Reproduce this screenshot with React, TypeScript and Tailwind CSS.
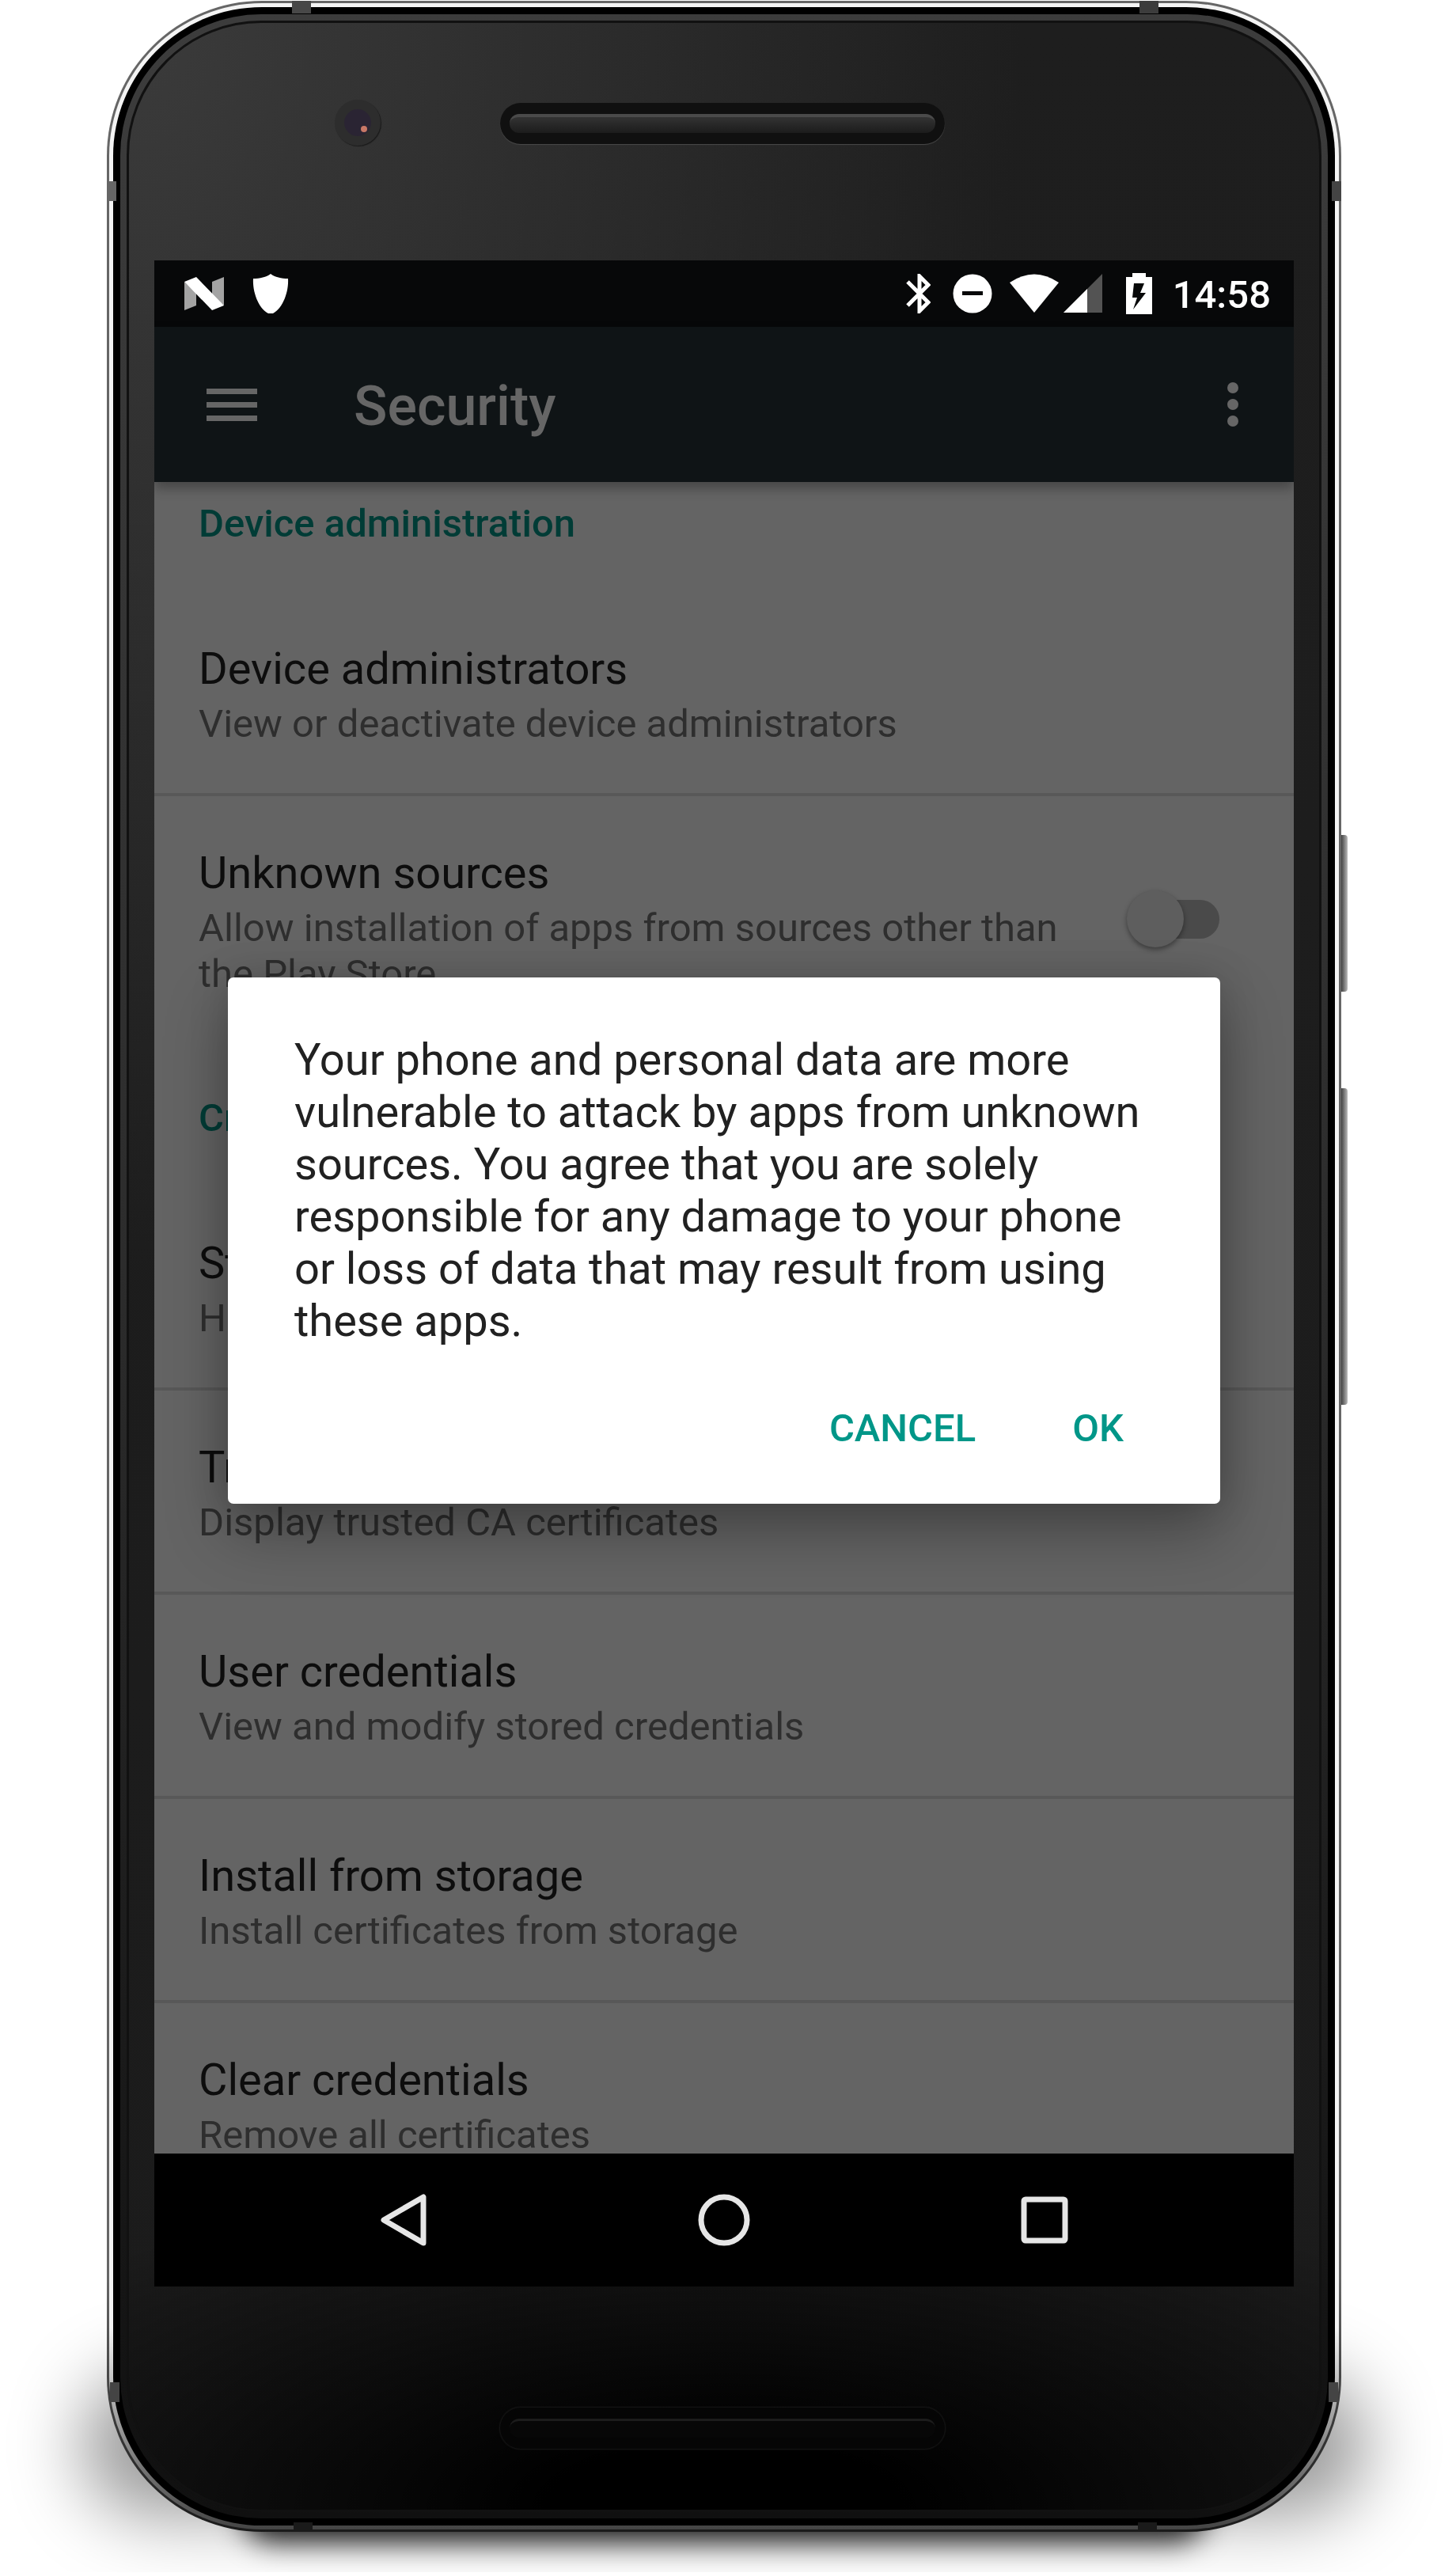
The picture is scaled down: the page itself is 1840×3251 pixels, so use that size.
import React from "react";

const Item = ({ title, summary, last }: { title: string; summary: string; last?: boolean }) => (
  <li className={last ? "" : "border-b-4 border-[#585858]"}>
    <a href="#" className="block px-14 pt-16 pb-[58px]">
      <span className="block text-[56px] leading-[66px] text-[#0d0d0d]">{title}</span>
      <span className="mt-2 block text-[49px] leading-[58px] text-[#2e2e2e]">{summary}</span>
    </a>
  </li>
);

const Slot = ({ dim }: { dim?: boolean }) => (
  <div
    className={
      dim
        ? "flex h-[52px] w-[562px] items-center rounded-[26px] bg-[#050505] px-3 shadow-[0_0_2px_1px_#191919]"
        : "flex h-[52px] w-[562px] items-center rounded-[26px] bg-[#101010] px-3 shadow-[0_1px_1px_#4a4a4a]"
    }
  >
    <div
      className={
        dim
          ? "h-6 w-full rounded-full border-t-3 border-[#1c1c1c] bg-[#070707]"
          : "h-6 w-full rounded-full border-t-4 border-[#4a4a4a] bg-linear-to-b from-[#333] to-[#1c1c1c]"
      }
    />
  </div>
);

const StatusBar = () => (
  <div className="flex h-[84px] shrink-0 items-center justify-between bg-[#070809] pr-[29px] pl-[38px] text-white">
    <div className="flex items-center gap-9">
      <svg width="50" height="42" viewBox="0 0 50 42" aria-label="Android N">
        <path d="M0 6 15 20V36L0 42Z" fill="#a3a3a3" />
        <path d="M35 6 50 0V36L35 24Z" fill="#a3a3a3" />
        <path d="M0 6 15 0 50 36 35 42Z" fill="#fff" />
      </svg>
      <svg width="46" height="50" viewBox="0 0 46 50" aria-label="Shield">
        <path d="M23 0C18 4 9 6 1 6C0 22 7 43 20 50H26C39 43 46 22 45 6C37 6 28 4 23 0Z" fill="#fff" />
      </svg>
    </div>
    <div className="flex items-center">
      <svg width="31" height="50" viewBox="0 0 31 50" aria-label="Bluetooth">
        <path d="M2 10 28 36 17 47V3L28 14 2 40" fill="none" stroke="#fff" strokeWidth="5" />
      </svg>
      <svg className="ml-7" width="50" height="50" viewBox="0 0 50 50" aria-label="Do not disturb">
        <circle cx="25" cy="25" r="24.5" fill="#fff" />
        <path d="M12 22H38V27H12Z" fill="#070809" />
      </svg>
      <svg className="ml-[22px]" width="62" height="50" viewBox="0 0 62 50" aria-label="Wi-Fi">
        <path d="M0 11Q31 -10 62 11L31 49Z" fill="#fff" />
      </svg>
      <svg className="ml-[6px]" width="49" height="50" viewBox="0 0 49 50" aria-label="Signal">
        <path d="M49 0V49H0Z" fill="#535353" />
        <path d="M30 19V49H0Z" fill="#fff" />
      </svg>
      <svg className="ml-[30px]" width="33" height="52" viewBox="0 0 33 52" aria-label="Battery charging">
        <path d="M8 0H25V5H33V52H0V5H8Z" fill="#fff" />
        <path d="M10 13H23L18 25H25L9 46L14 31H8Z" fill="#070809" />
      </svg>
      <span className="ml-[26px] pt-1 text-[49px] leading-[58px] font-medium">14:58</span>
    </div>
  </div>
);

const AppBar = () => (
  <header className="relative z-10 flex h-[196px] shrink-0 items-center bg-[#0f1416] pr-[70px] pl-[66px] text-[#666] shadow-[0_8px_14px_rgba(0,0,0,0.3)]">
    <button aria-label="Menu" className="flex w-16 flex-col gap-[10px]">
      <span className="h-[7px] w-full bg-current" />
      <span className="h-[7px] w-full bg-current" />
      <span className="h-[7px] w-full bg-current" />
    </button>
    <h1 className="ml-[122px] flex-1 pt-1 text-[70px] leading-[82px] font-medium">Security</h1>
    <button aria-label="More options" className="flex flex-col gap-[7px]">
      <span className="size-[14px] rounded-full bg-current" />
      <span className="size-[14px] rounded-full bg-current" />
      <span className="size-[14px] rounded-full bg-current" />
    </button>
  </header>
);

const Category = ({ children, first }: { children: string; first?: boolean }) => (
  <h2
    className={
      first
        ? "px-14 pt-6 pb-[57px] text-[49px] leading-[58px] font-medium text-[#003c36]"
        : "px-14 pt-[66px] pb-[57px] text-[49px] leading-[58px] font-medium text-[#003c36]"
    }
  >
    {children}
  </h2>
);

const Settings = () => (
  <main className="min-h-0 flex-1 overflow-hidden bg-[#646464]">
    <Category first>Device administration</Category>
    <ul>
      <Item title="Device administrators" summary="View or deactivate device administrators" />
      <li>
        <label className="flex items-center px-14 pt-16 pb-[58px]">
          <span className="flex-1 pr-14">
            <span className="block text-[56px] leading-[66px] text-[#0d0d0d]">Unknown sources</span>
            <span className="mt-2 block text-[49px] leading-[58px] text-[#2e2e2e]">
              Allow installation of apps from sources other than the Play Store
            </span>
          </span>
          <input
            type="checkbox"
            role="switch"
            className="relative mr-[38px] mb-2 h-[49px] w-[105px] appearance-none rounded-full bg-[#4a4a4a] before:absolute before:-top-3 before:-left-3 before:size-[72px] before:rounded-full before:bg-[#5e5e5e] before:shadow-[0_3px_6px_rgba(0,0,0,0.4)]"
          />
        </label>
      </li>
    </ul>
    <Category>Credential storage</Category>
    <ul>
      <Item title="Storage type" summary="Hardware-backed" />
      <Item title="Trusted credentials" summary="Display trusted CA certificates" />
      <Item title="User credentials" summary="View and modify stored credentials" />
      <Item title="Install from storage" summary="Install certificates from storage" />
      <Item title="Clear credentials" summary="Remove all certificates" last />
    </ul>
  </main>
);

const Dialog = () => (
  <div className="absolute inset-0 z-20 flex items-center justify-center px-[93px]">
    <div
      role="alertdialog"
      aria-describedby="warning"
      className="w-full rounded-[7px] bg-white px-[84px] pt-[71px] pb-[66px] shadow-[0_36px_80px_rgba(0,0,0,0.3),0_0_50px_rgba(0,0,0,0.15)]"
    >
      <p id="warning" className="text-[56px] leading-[66px] text-[#212121]">
        Your phone and personal data are more vulnerable to attack by apps from unknown sources. You agree that you are
        solely responsible for any damage to your phone or loss of data that may result from using these apps.
      </p>
      <div className="mt-[74px] flex justify-end gap-[122px] pr-[38px] text-[49px] leading-[58px] font-medium text-[#009688]">
        <button>CANCEL</button>
        <button>OK</button>
      </div>
    </div>
  </div>
);

const NavBar = () => (
  <nav className="grid h-[168px] shrink-0 grid-cols-3 place-items-center bg-black px-28">
    <button aria-label="Back">
      <svg width="66" height="66" viewBox="0 0 66 66" fill="none" stroke="#e6e6e6" strokeWidth="7" strokeLinejoin="round">
        <path d="M58 4V62L8 33Z" />
      </svg>
    </button>
    <button aria-label="Home">
      <svg width="66" height="66" viewBox="0 0 66 66" fill="none" stroke="#e6e6e6" strokeWidth="7">
        <circle cx="33" cy="33" r="29" />
      </svg>
    </button>
    <button aria-label="Recent apps">
      <svg width="66" height="66" viewBox="0 0 66 66" fill="none" stroke="#e6e6e6" strokeWidth="7">
        <rect x="7" y="7" width="52" height="52" rx="2" />
      </svg>
    </button>
  </nav>
);

export default function App() {
  return (
    <div className="overflow-hidden bg-white pt-px pr-[145px] pb-[51px] pl-[135px] font-[Roboto,sans-serif]">
      <div className="relative">
        <div className="absolute -inset-x-8 bottom-5 h-[180px] rounded-[90px] bg-black/40 blur-[45px]" />
        <div className="absolute inset-x-[170px] -bottom-3 h-20 rounded-[40px] bg-black/90 blur-[18px]" />
        <div className="absolute top-[1054px] -right-2 h-[198px] w-5 rounded-r-[4px] bg-linear-to-r from-[#444] from-60% to-[#bbb]" />
        <div className="absolute top-[1374px] -right-2 h-[400px] w-5 rounded-r-[4px] bg-linear-to-r from-[#444] from-60% to-[#bbb]" />

        <div className="relative rounded-[196px] bg-linear-to-b from-[#666] from-90% to-[#1a1a1a] p-[3px]">
          <div className="rounded-[193px] bg-linear-to-b from-[#f4f4f4] from-92% to-[#444] p-[5px]">
            <div className="rounded-[188px] bg-black p-[9px]">
              <div className="rounded-[178px] bg-linear-to-b from-[#3c3c3c] via-[#2c2c2c] via-50% to-[#101010] p-2">
                <div className="rounded-[170px] border-[3px] border-[#111] bg-[radial-gradient(ellipse_75%_14%_at_50%_100%,#000_20%,transparent),radial-gradient(ellipse_75%_50%_at_0%_0%,#3b3b3b,transparent),linear-gradient(#1e1e1e,#1b1b1b)] px-8">
                  <div className="relative flex h-[300px] items-start justify-center pt-[101px] pr-1">
                    <div className="absolute top-[97px] left-[228px] flex size-[58px] items-center justify-center rounded-full bg-[#2d2d2d] shadow-[1px_1px_1px_#1a1a1a]">
                      <div className="flex size-[34px] items-center justify-center rounded-full bg-[#2a2433]">
                        <div className="mt-4 ml-4 size-2 rounded-full bg-[#c87866]" />
                      </div>
                    </div>
                    <Slot />
                  </div>
                  <div className="flex aspect-[9/16] flex-col overflow-hidden">
                    <StatusBar />
                    <div className="relative flex min-h-0 flex-1 flex-col">
                      <AppBar />
                      <Settings />
                      <Dialog />
                    </div>
                    <NavBar />
                  </div>
                  <div className="flex h-[282px] items-start justify-center pt-[153px] pr-1">
                    <Slot dim />
                  </div>
                </div>
              </div>
            </div>
          </div>
          <div className="absolute top-0 left-[234px] h-4 w-6 bg-[#484848]" />
          <div className="absolute top-0 right-[231px] h-4 w-6 bg-[#3c3c3c]" />
          <div className="absolute top-[228px] left-0 h-[25px] w-3 bg-[#666]" />
          <div className="absolute top-[228px] right-0 h-[25px] w-3 bg-[#444]" />
          <div className="absolute bottom-[164px] left-1 h-[25px] w-3 bg-[#444]" />
          <div className="absolute right-1 bottom-[164px] h-[25px] w-3 bg-[#444]" />
          <div className="absolute bottom-0 left-[236px] h-3 w-6 bg-[#1a1a1a]" />
          <div className="absolute right-[233px] bottom-0 h-3 w-6 bg-[#1a1a1a]" />
        </div>
      </div>
    </div>
  );
}
